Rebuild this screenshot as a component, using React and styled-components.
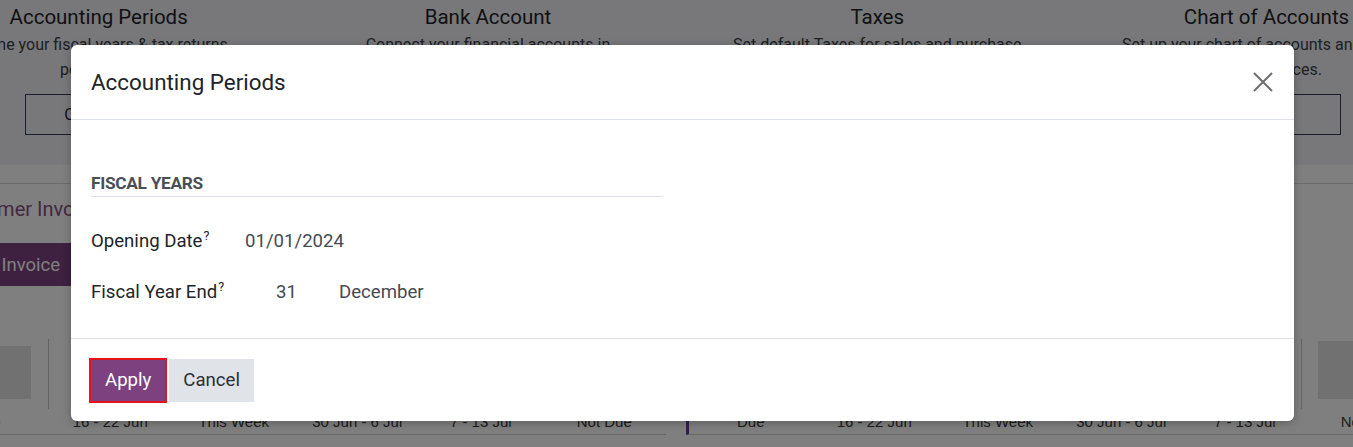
import React from "react";
import styled, { createGlobalStyle } from "styled-components";

const GlobalStyle = createGlobalStyle`
  body {
    margin: 0;
    font-family: Roboto, "Noto Sans", "Liberation Sans", sans-serif;
    overflow: hidden;
  }
  * { box-sizing: border-box; }
`;

const steps = [
  {
    title: "Accounting Periods",
    text: "Define your fiscal years & tax returns periodicity.",
    action: "Configure",
  },
  {
    title: "Bank Account",
    text: "Connect your financial accounts in seconds.",
    action: "Add a bank account",
  },
  {
    title: "Taxes",
    text: "Set default Taxes for sales and purchase transactions.",
    action: "Review",
  },
  {
    title: "Chart of Accounts",
    text: "Set up your chart of accounts and record initial balances.",
    action: "Review",
  },
];

const periods = ["Due", "16 - 22 Jun", "This Week", "30 Jun - 6 Jul", "7 - 13 Jul", "Not Due"];

const cards = [
  {
    title: "Customer Invoices",
    action: "New Invoice",
    bars: [53, 0, 0, 0, 0, 0],
    divider: 0,
  },
  {
    title: "Vendor Bills",
    action: "Upload",
    bars: [0, 0, 0, 0, 0, 58],
    divider: 4,
    marker: true,
  },
];

function App() {
  return (
    <Page>
      <GlobalStyle />
      <Onboarding>
        {steps.map((s) => (
          <Step key={s.title}>
            <StepTitle>{s.title}</StepTitle>
            <StepText>{s.text}</StepText>
            <StepButton>{s.action}</StepButton>
          </Step>
        ))}
      </Onboarding>
      <ControlBand />
      <Dashboard>
        {cards.map((c) => (
          <Card key={c.title}>
            <CardTitle>{c.title}</CardTitle>
            <CardButton>{c.action}</CardButton>
            <Plot>
              {c.bars.map((h, i) => (
                <PlotColumn key={i} $divider={i === c.divider}>
                  {h > 0 && <Bar style={{ height: h }} />}
                </PlotColumn>
              ))}
            </Plot>
            <Axis $marker={c.marker}>
              {periods.map((p) => (
                <AxisLabel key={p}>{p}</AxisLabel>
              ))}
            </Axis>
          </Card>
        ))}
      </Dashboard>

      <Backdrop />
      <Dialog>
        <DialogHeader>
          <DialogTitle>Accounting Periods</DialogTitle>
          <CloseButton aria-label="Close">
            <svg width="20" height="20" viewBox="0 0 20 20">
              <path
                d="M1 1 L19 19 M19 1 L1 19"
                stroke="#6f6f6f"
                strokeWidth="2"
                fill="none"
              />
            </svg>
          </CloseButton>
        </DialogHeader>
        <DialogBody>
          <SectionTitle>FISCAL YEARS</SectionTitle>
          <Fields>
            <FieldRow>
              <FieldLabel>
                Opening Date<Help>?</Help>
              </FieldLabel>
              <FieldValue>01/01/2024</FieldValue>
            </FieldRow>
            <FieldRow>
              <FieldLabel>
                Fiscal Year End<Help>?</Help>
              </FieldLabel>
              <DayValue>31</DayValue>
              <FieldValue>December</FieldValue>
            </FieldRow>
          </Fields>
        </DialogBody>
        <DialogFooter>
          <PrimaryButton>Apply</PrimaryButton>
          <SecondaryButton>Cancel</SecondaryButton>
        </DialogFooter>
      </Dialog>
    </Page>
  );
}

export default App;

const Page = styled.div`
  position: relative;
  width: 1353px;
  height: 447px;
  overflow: hidden;
  background: #ffffff;
`;

const Onboarding = styled.section`
  display: flex;
  width: 1600px;
  height: 165px;
  margin-left: -96px;
  background: #f0f1f4;
`;

const Step = styled.div`
  flex: 0 0 389.3px;
  display: flex;
  flex-direction: column;
  align-items: center;
  padding-top: 4px;
  text-align: center;
`;

const StepTitle = styled.div`
  font-size: 20.5px;
  line-height: 26px;
  color: #1f2328;
`;

const StepText = styled.div`
  max-width: 300px;
  margin-top: 2px;
  font-size: 16px;
  line-height: 25px;
  color: #3c4148;
`;

const StepButton = styled.button`
  width: 148px;
  height: 41px;
  margin-top: 12px;
  border: 1px solid #33415a;
  background: transparent;
  font-family: inherit;
  font-size: 16px;
  color: #1f2328;
`;

const ControlBand = styled.div`
  height: 19px;
  border-bottom: 1px solid #d6d8dc;
`;

const Dashboard = styled.div`
  display: flex;
  gap: 18px;
  margin-left: -75px;
`;

const Card = styled.div`
  flex: 0 0 741px;
  display: flex;
  flex-direction: column;
`;

const CardTitle = styled.div`
  padding: 12px 20px 0;
  font-size: 20px;
  line-height: 26px;
  color: #8a4f85;
`;

const CardButton = styled.button`
  align-self: flex-start;
  height: 43px;
  margin: 21px 0 0 20px;
  padding: 0 15px;
  border: none;
  background: #7d4080;
  color: #ffffff;
  font-family: inherit;
  font-size: 18.5px;
`;

const Plot = styled.div`
  display: flex;
  height: 70px;
  margin-top: 53px;
`;

const PlotColumn = styled.div`
  flex: 0 0 123.5px;
  display: flex;
  align-items: flex-end;
  justify-content: center;
  padding-bottom: 10px;
  border-right: 1px solid ${(p) => (p.$divider ? "#c9c9c9" : "transparent")};
`;

const Bar = styled.div`
  width: 90px;
  background: #e3e3e3;
`;

const Axis = styled.div`
  display: flex;
  height: 26px;
  border-bottom: 1px solid #cfcfcf;
  border-left: ${(p) => (p.$marker ? "3px solid #6a3d9a" : "none")};
  margin-left: ${(p) => (p.$marker ? "2px" : "0")};
`;

const AxisLabel = styled.div`
  flex: 0 0 123.5px;
  text-align: center;
  font-family: "Liberation Sans", Arial, sans-serif;
  font-size: 15px;
  line-height: 25px;
  color: #3a3a3a;
`;

const Backdrop = styled.div`
  position: absolute;
  inset: 0;
  background: rgba(0, 0, 0, 0.5);
`;

const Dialog = styled.div`
  position: absolute;
  top: 45px;
  left: 71px;
  width: 1223px;
  height: 376px;
  display: flex;
  flex-direction: column;
  background: #ffffff;
  border-radius: 6px;
  box-shadow: 0 2px 8px rgba(0, 0, 0, 0.25);
  overflow: hidden;
`;

const DialogHeader = styled.div`
  display: flex;
  align-items: center;
  justify-content: space-between;
  height: 75px;
  padding: 0 20px;
  border-bottom: 1px solid #dee2e6;
`;

const DialogTitle = styled.h4`
  margin: 0;
  font-size: 22.4px;
  font-weight: 400;
  color: #212529;
`;

const CloseButton = styled.button`
  display: flex;
  padding: 0;
  margin-right: 1px;
  border: none;
  background: none;
`;

const DialogBody = styled.div`
  height: 219px;
  padding: 51px 20px 0;
  border-bottom: 1px solid #dee2e6;
`;

const SectionTitle = styled.div`
  width: 572px;
  padding-bottom: 1px;
  border-bottom: 1px solid #dee2e6;
  font-size: 17.3px;
  font-weight: 700;
  line-height: 24px;
  letter-spacing: -0.3px;
  color: #4a4f55;
`;

const Fields = styled.div`
  margin-top: 18px;
`;

const FieldRow = styled.div`
  display: flex;
  align-items: center;
  height: 51px;
`;

const FieldLabel = styled.div`
  flex: 0 0 154px;
  font-size: 18.6px;
  color: #212529;
`;

const Help = styled.sup`
  margin-left: 1px;
  font-size: 12.5px;
  color: #212529;
`;

const FieldValue = styled.div`
  font-size: 18.6px;
  color: #454b52;
`;

const DayValue = styled(FieldValue)`
  flex: 0 0 63px;
  margin-left: 31px;
`;

const DialogFooter = styled.div`
  flex: 1;
  display: flex;
  align-items: center;
  gap: 2px;
  padding: 0 18px;
`;

const PrimaryButton = styled.button`
  height: 45px;
  padding: 0 14px;
  border: 2px solid #e5141c;
  background: #7d4180;
  color: #ffffff;
  font-family: inherit;
  font-size: 18.6px;
`;

const SecondaryButton = styled.button`
  height: 43px;
  padding: 0 14px;
  border: none;
  background: #e0e3e8;
  color: #2b2f33;
  font-family: inherit;
  font-size: 18.6px;
`;
